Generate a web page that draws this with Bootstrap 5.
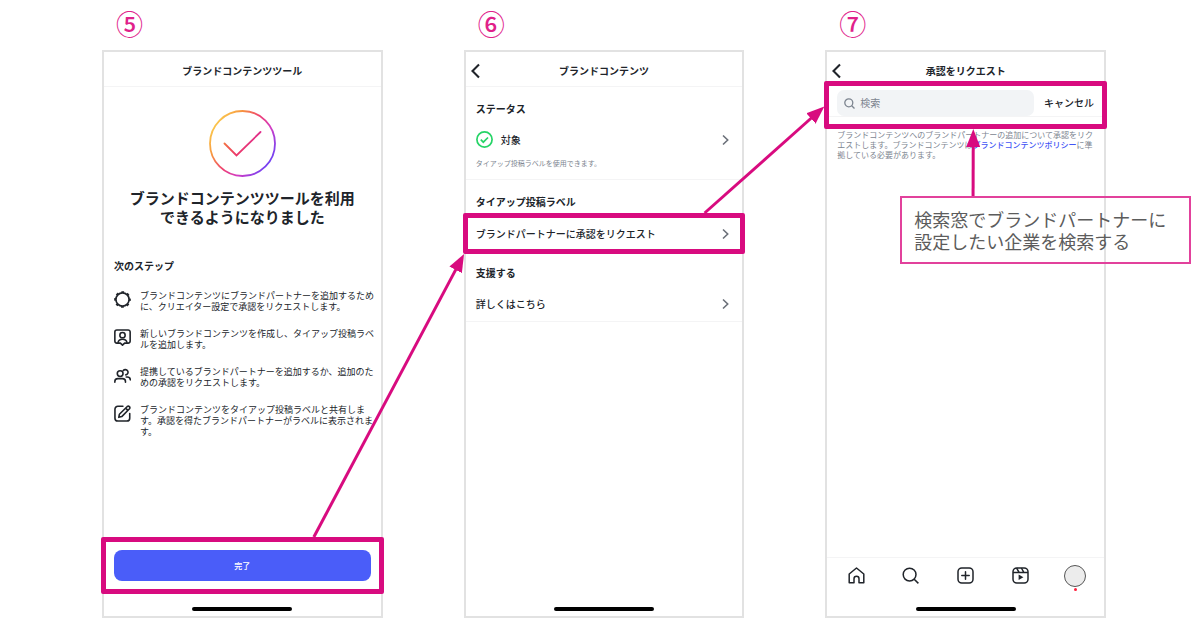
<!DOCTYPE html>
<html lang="ja">
<head>
<meta charset="utf-8">
<meta name="viewport" content="width=device-width, initial-scale=1">
<title>ブランドコンテンツツール 設定手順</title>
<link href="https://cdn.jsdelivr.net/npm/bootstrap@5.3.0/dist/css/bootstrap.min.css" rel="stylesheet">
<style>
  :root { --pink: #d80b7f; --ink: #20242a; --soft: #7d8590; --hair: #f4f4f5; }
  body { font-family: "Noto Sans CJK JP", "Noto Sans", sans-serif; font-size: 10px; line-height: 16px; color: var(--ink); background: #fff; }
  .board { display: grid; grid-template-columns: repeat(3, minmax(280px, 1fr)); column-gap: 81px; padding: 0 94px 16px 102px; min-height: 100vh; }
  .step-no { height: 50px; padding: 4px 0 0 14px; font-size: 27px; line-height: 40px; color: #e0218a; font-weight: 500; }
  .phone { border: 2px solid #e2e2e2; min-height: 568px; }
  .phone-head { height: 35px; padding: 4px 5px 0; border-bottom: 1px solid var(--hair); display: grid; grid-template-columns: 16px 1fr 16px; align-items: center; }
  .phone-head h2, .label-title { font-size: 10px; line-height: 16px; font-weight: 700; margin: 0; }
  .phone-head.short { height: 29px; padding-top: 11px; border-bottom: 0; }
  .phone-head.short > * { align-self: start; }
  .plain-btn { border: 0; background: none; padding: 0; color: inherit; line-height: 16px; }
  .plain-btn svg, .plain-link svg { display: block; }
  .frame { border: 5px solid var(--pink); border-radius: 2px; margin: 0 -3px; }
  .home-bar { width: 100px; height: 4px; border-radius: 2px; background: #000; margin-bottom: 5px; }
  .home-bar.low { margin-top: 14px; }
  .done-mark { margin-top: 23px; margin-bottom: 11px; }
  .done-title { font-size: 15px; line-height: 19px; font-weight: 700; margin: 0; }
  .next { margin-top: 32px; padding: 0 10px; }
  .next .label-title { margin-bottom: 16px; }
  .steps { display: grid; row-gap: 16px; font-size: 9px; line-height: 11px; font-weight: 400; white-space: nowrap; }
  .steps li { display: flex; align-items: flex-start; gap: 9px; }
  .steps svg { flex: none; margin-top: 1px; }
  #frameDone { margin-bottom: 13px; padding: 8px; }
  .done-btn { height: 31px; border-radius: 8px; background: #4a5df9; color: #fff; font-size: 8px; font-weight: 500; border: 0; padding: 0; }
  .done-btn:hover { background: #3c4fe8; color: #fff; }
  .group { padding: 14px 13px 0 10px; }
  .group .row-link { margin-top: 7px; }
  .group .tiny { margin: 3px 0 11px; }
  .group.tie { padding-bottom: 3px; }
  .group.help { padding-top: 11px; padding-bottom: 2px; }
  .row-link { color: var(--ink); text-decoration: none; display: flex; align-items: center; font-weight: 500; height: 31px; }
  #frameRequest .row-link { padding: 0 11px 0 8px; }
  .tiny { font-size: 7px; line-height: 10px; color: var(--soft); }
  .note { font-size: 8px; line-height: 10px; color: var(--soft); white-space: nowrap; padding: 1px 0 0 10px; margin: 0; }
  .note a { color: #4355f5; font-weight: 500; text-decoration: none; }
  .rule { border-bottom: 1px solid var(--hair); }
  .search-frame { padding: 4px 0 7px; }
  .find { background: #f2f4f6; border-radius: 7px; height: 26px; padding: 0 7px; gap: 5px; color: var(--soft); }
  .find input { border: 0; background: none; outline: 0; padding: 0; width: 100%; min-width: 0; color: var(--ink); font-size: 10px; line-height: 16px; }
  .find input::placeholder { color: var(--soft); opacity: 1; }
  .cancel { font-weight: 500; padding: 0 8px 0 10px; }
  .tabs { border-top: 1px solid var(--hair); height: 36px; padding: 0 18px; }
  .plain-link { width: 22px; display: flex; justify-content: center; }
  .avatar { width: 22px; height: 22px; border-radius: 50%; background: #ececec; border: 1px solid #555; position: relative; display: block; }
  .avatar::after { content: ""; position: absolute; left: 9px; top: 22px; width: 3px; height: 3px; border-radius: 50%; background: #ff1e3c; }
  .callout-note { position: absolute; left: 73px; top: 144px; border: 2px solid #e2419c; padding: 10px 11px 10px 12px; width: 291px; font-size: 18px; line-height: 22px; color: #5c5c5c; white-space: nowrap; }
  .arrows { position: absolute; inset: 0; width: 100%; height: 100%; pointer-events: none; }
</style>
</head>
<body>
<main class="board position-relative" id="board">

  <section class="d-flex flex-column">
    <div class="step-no">⑤</div>
    <div class="phone flex-fill d-flex flex-column">
      <header class="phone-head"><span></span><h2 class="text-center">ブランドコンテンツツール</h2><span></span></header>
      <div class="text-center">
        <svg class="done-mark d-block mx-auto" width="67" height="67" viewBox="0 0 67 67" fill="none" aria-hidden="true">
          <defs>
            <linearGradient id="ring" gradientUnits="userSpaceOnUse" x1="4" y1="12" x2="62" y2="52">
              <stop offset="0" stop-color="#fbd050"/><stop offset=".25" stop-color="#f7953f"/><stop offset=".5" stop-color="#ee3f72"/><stop offset=".72" stop-color="#d23cc4"/><stop offset="1" stop-color="#6f42f5"/>
            </linearGradient>
            <linearGradient id="tick" gradientUnits="userSpaceOnUse" x1="15" y1="34" x2="52" y2="34">
              <stop offset="0" stop-color="#f47340"/><stop offset=".3" stop-color="#ec3a68"/><stop offset="1" stop-color="#e02e8c"/>
            </linearGradient>
          </defs>
          <circle cx="33.5" cy="33.5" r="32.5" stroke="url(#ring)" stroke-width="1.8"/>
          <path d="M15.5 33.5 27.5 45.5 51.5 22" stroke="url(#tick)" stroke-width="1.8" stroke-linecap="round"/>
        </svg>
        <h3 class="done-title">ブランドコンテンツツールを利用<br>できるようになりました</h3>
      </div>
      <div class="next">
        <h4 class="label-title">次のステップ</h4>
        <ul class="steps list-unstyled mb-4">
          <li>
            <svg width="17" height="17" viewBox="0 0 16 16" fill="none" stroke="currentColor" stroke-width="1.6" aria-hidden="true"><circle cx="8" cy="8" r="6.2"/><circle cx="8" cy="8" r="7" stroke-width="1.7" stroke-dasharray="2.5 2.998" stroke-dashoffset="1.25"/></svg>
            <span>ブランドコンテンツにブランドパートナーを追加するため<br>に、クリエイター設定で承認をリクエストします。</span>
          </li>
          <li>
            <svg width="17" height="17" viewBox="0 0 16 16" fill="none" stroke="currentColor" stroke-width="1.5" stroke-linejoin="round" aria-hidden="true"><path d="M2.7.9h10.6a1.9 1.9 0 0 1 1.9 1.9v8.6a1.9 1.9 0 0 1-1.9 1.9H10L8 15.2l-2-1.9H2.7a1.9 1.9 0 0 1-1.9-1.9V2.8A1.9 1.9 0 0 1 2.7.9Z"/><circle cx="8" cy="5.8" r="2.5"/><path d="M3.7 13c.5-2.4 2.1-3.3 4.3-3.3s3.8.9 4.3 3.3"/></svg>
            <span>新しいブランドコンテンツを作成し、タイアップ投稿ラベ<br>ルを追加します。</span>
          </li>
          <li>
            <svg width="17" height="17" viewBox="0 0 16 16" fill="none" stroke="currentColor" stroke-width="1.5" stroke-linecap="round" aria-hidden="true"><circle cx="5.8" cy="6.2" r="2.7"/><path d="M.8 14.4v-.7c0-1.7 1.2-2.8 2.8-2.8H8c1.6 0 2.8 1.1 2.8 2.8v.7M8.7 3.4a2.5 2.5 0 1 1 2.4 4H11M11.5 9.4h1c1.7 0 2.8 1 2.8 2.7"/></svg>
            <span>提携しているブランドパートナーを追加するか、追加のた<br>めの承認をリクエストします。</span>
          </li>
          <li>
            <svg width="17" height="17" viewBox="0 0 16 16" fill="none" stroke="currentColor" stroke-width="1.5" stroke-linecap="round" stroke-linejoin="round" aria-hidden="true"><path d="M8.4 1.2H3.6A2.7 2.7 0 0 0 .9 3.9v8.5a2.7 2.7 0 0 0 2.7 2.7h8.5a2.7 2.7 0 0 0 2.7-2.7V8"/><path d="m4.5 11.6.6-2.9 7.4-7.3a1.5 1.5 0 0 1 2.1 2.1l-7.3 7.4-2.8.7ZM11 3l2 2"/></svg>
            <span>ブランドコンテンツをタイアップ投稿ラベルと共有しま<br>す。承認を得たブランドパートナーがラベルに表示されま<br>す。</span>
          </li>
        </ul>
      </div>
      <div class="frame mt-auto" id="frameDone">
        <button type="button" class="done-btn btn w-100 d-block">完了</button>
      </div>
      <div class="home-bar mx-auto"></div>
    </div>
  </section>

  <section class="d-flex flex-column">
    <div class="step-no">⑥</div>
    <div class="phone flex-fill d-flex flex-column">
      <header class="phone-head">
        <button type="button" class="plain-btn" aria-label="戻る"><svg width="9" height="16" viewBox="0 0 9 16" fill="none" stroke="currentColor" stroke-width="2.1"><path d="M8 1.5 1.5 8 8 14.5"/></svg></button>
        <h2 class="text-center">ブランドコンテンツ</h2><span></span>
      </header>
      <div class="group rule">
        <h3 class="label-title">ステータス</h3>
        <a href="#" class="row-link">
          <svg class="me-2" width="17" height="17" viewBox="0 0 17 17" fill="none" stroke="#26d467" stroke-width="1.7" aria-hidden="true"><circle cx="8.5" cy="8.5" r="7.6"/><path d="m4.8 8.7 2.5 2.5 4.7-4.7"/></svg>
          対象
          <svg class="ms-auto" width="7" height="12" viewBox="0 0 7 12" fill="none" stroke="#6b7079" stroke-width="1.6" aria-hidden="true"><path d="m1 1.5 4.7 4.5L1 10.5"/></svg>
        </a>
        <p class="tiny">タイアップ投稿ラベルを使用できます。</p>
      </div>
      <div class="group tie">
        <h3 class="label-title">タイアップ投稿ラベル</h3>
      </div>
      <div class="frame" id="frameRequest">
        <a href="#" class="row-link">ブランドパートナーに承認をリクエスト
          <svg class="ms-auto" width="7" height="12" viewBox="0 0 7 12" fill="none" stroke="#6b7079" stroke-width="1.6" aria-hidden="true"><path d="m1 1.5 4.7 4.5L1 10.5"/></svg>
        </a>
      </div>
      <div class="group help rule">
        <h3 class="label-title">支援する</h3>
        <a href="#" class="row-link">詳しくはこちら
          <svg class="ms-auto" width="7" height="12" viewBox="0 0 7 12" fill="none" stroke="#6b7079" stroke-width="1.6" aria-hidden="true"><path d="m1 1.5 4.7 4.5L1 10.5"/></svg>
        </a>
      </div>
      <div class="home-bar mx-auto mt-auto"></div>
    </div>
  </section>

  <section class="d-flex flex-column">
    <div class="step-no">⑦</div>
    <div class="phone flex-fill d-flex flex-column position-relative">
      <header class="phone-head short">
        <button type="button" class="plain-btn" aria-label="戻る"><svg width="9" height="16" viewBox="0 0 9 16" fill="none" stroke="currentColor" stroke-width="2.1"><path d="M8 1.5 1.5 8 8 14.5"/></svg></button>
        <h2 class="text-center">承認をリクエスト</h2><span></span>
      </header>
      <div class="frame search-frame" id="frameSearch">
        <div class="d-flex align-items-center rule ps-2">
          <label class="find d-flex align-items-center flex-fill">
            <svg class="flex-shrink-0" width="11" height="11" viewBox="0 0 11 11" fill="none" stroke="currentColor" stroke-width="1.3" aria-hidden="true"><circle cx="4.8" cy="4.8" r="4"/><path d="m7.7 7.7 2.8 2.8"/></svg>
            <input type="text" placeholder="検索" aria-label="検索">
          </label>
          <button type="button" class="plain-btn cancel text-nowrap">キャンセル</button>
        </div>
      </div>
      <p class="note">ブランドコンテンツへのブランドパートナーの追加について承認をリク<br>エストします。ブランドコンテンツは<a href="#">ブランドコンテンツポリシー</a>に準<br>拠している必要があります。</p>
      <div class="callout-note" id="callout">検索窓でブランドパートナーに<br>設定したい企業を検索する</div>
      <nav class="tabs mt-auto d-flex align-items-center justify-content-between" aria-label="メイン">
        <a href="#" class="plain-link text-reset" aria-label="ホーム"><svg width="17" height="17" viewBox="0 0 17 17" fill="none" stroke="currentColor" stroke-width="1.5" stroke-linejoin="round"><path d="M6 15.7H1.2V7L8.5 1l7.3 6v8.7H11v-3.9a2.5 2.5 0 0 0-5 0Z"/></svg></a>
        <a href="#" class="plain-link text-reset" aria-label="検索"><svg width="17" height="17" viewBox="0 0 17 17" fill="none" stroke="currentColor" stroke-width="1.5"><circle cx="7.6" cy="7.6" r="6.4"/><path d="m12.2 12.2 4.2 4.2"/></svg></a>
        <a href="#" class="plain-link text-reset" aria-label="作成"><svg width="17" height="17" viewBox="0 0 17 17" fill="none" stroke="currentColor" stroke-width="1.5" stroke-linecap="round"><rect x="1" y="1" width="15" height="15" rx="3.8"/><path d="M8.5 4.8v7.4M4.8 8.5h7.4"/></svg></a>
        <a href="#" class="plain-link text-reset" aria-label="リール"><svg width="17" height="17" viewBox="0 0 17 17" fill="none" stroke="currentColor" stroke-width="1.5"><rect x="1" y="1" width="15" height="15" rx="3.8"/><path d="M1 5.4h15M4.6 1.2 7 5.2M9.4 1l2.4 4.3"/><path d="M6.6 7.5v5.6l4.8-2.8Z" fill="currentColor" stroke="none"/></svg></a>
        <a href="#" class="avatar" aria-label="プロフィール"></a>
      </nav>
      <div class="home-bar mx-auto low"></div>
    </div>
  </section>

  <svg class="arrows" aria-hidden="true">
    <defs><marker id="head" markerUnits="userSpaceOnUse" markerWidth="18" markerHeight="14" refX="4" refY="7" orient="auto"><path d="M0 0 18 7 0 14Z" fill="#d80b7f"/></marker></defs>
    <g id="lines" stroke="#d80b7f" stroke-width="3"></g>
  </svg>
</main>

<script src="https://cdn.jsdelivr.net/npm/bootstrap@5.3.0/dist/js/bootstrap.bundle.min.js"></script>
<script>
  // Each connector runs between two anchors: [element id, share of width, share of height].
  const links = [
    [['frameDone', .753, 0], ['frameRequest', .005, 1]],
    [['frameRequest', .856, 0], ['frameSearch', 0, .53]],
    [['callout', .25, 0], ['frameSearch', .527, 1]]
  ];
  const board = document.getElementById('board');
  const lines = document.getElementById('lines');
  function anchor([id, fx, fy]) {
    const r = document.getElementById(id).getBoundingClientRect();
    const b = board.getBoundingClientRect();
    return { x: r.left - b.left + r.width * fx, y: r.top - b.top + r.height * fy };
  }
  function draw() {
    lines.replaceChildren();
    for (const [from, to] of links) {
      const a = anchor(from), z = anchor(to);
      const len = Math.hypot(z.x - a.x, z.y - a.y), k = (len - 14) / len;
      const p = document.createElementNS('http://www.w3.org/2000/svg', 'path');
      p.setAttribute('d', `M${a.x} ${a.y}L${a.x + (z.x - a.x) * k} ${a.y + (z.y - a.y) * k}`);
      p.setAttribute('marker-end', 'url(#head)');
      lines.append(p);
    }
  }
  draw();
  addEventListener('resize', draw);
</script>
</body>
</html>
